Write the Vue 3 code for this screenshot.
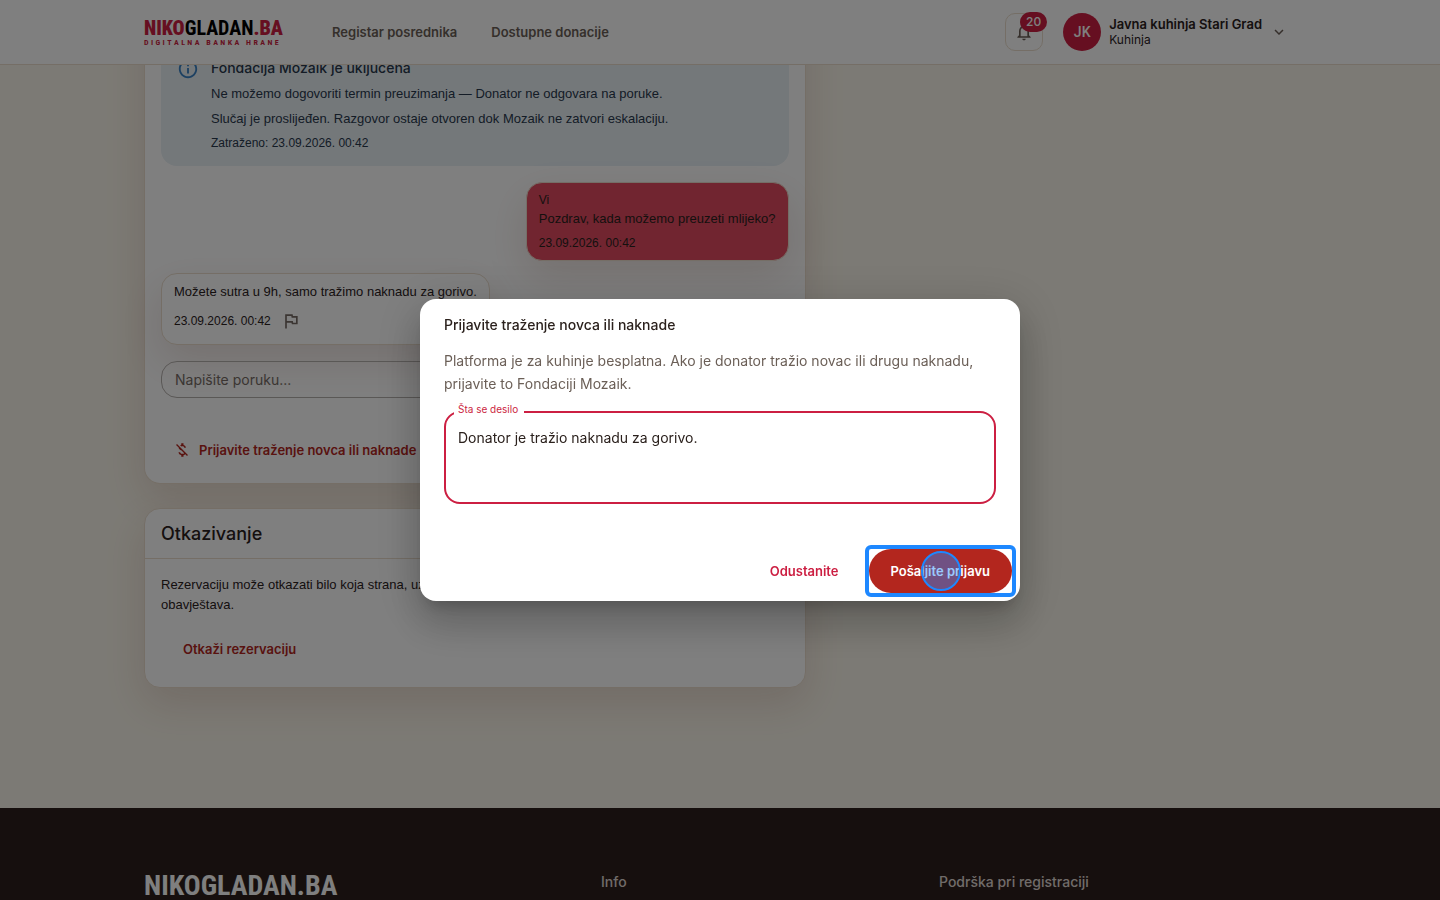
<template>
  <div class="page">
    <header class="topbar">
      <div class="container topbar-inner">
        <a href="#" class="logo">
          <span class="logo-name"><b>NIKO</b>GLADAN<b>.BA</b></span>
          <span class="logo-tag"><i v-for="(letter, i) in tagline" :key="i">{{ letter }}</i></span>
        </a>
        <nav class="nav">
          <a v-for="link in navLinks" :key="link" href="#">{{ link }}</a>
        </nav>
        <button class="bell" aria-label="Obavijesti">
          <svg viewBox="0 0 24 24" width="20" height="20"><path fill="currentColor" d="M12 22c1.1 0 2-.9 2-2h-4c0 1.1.9 2 2 2m6-6v-5c0-3.07-1.63-5.64-4.5-6.32V4c0-.83-.67-1.5-1.5-1.5s-1.5.67-1.5 1.5v.68C7.64 5.36 6 7.92 6 11v5l-2 2v1h16v-1zm-2 1H8v-6c0-2.48 1.51-4.5 4-4.5s4 2.02 4 4.5z"/></svg>
          <span class="badge">20</span>
        </button>
        <button class="account">
          <span class="avatar">JK</span>
          <span class="who"><strong>Javna kuhinja Stari Grad</strong><span>Kuhinja</span></span>
          <svg viewBox="0 0 24 24" width="18" height="18"><path fill="currentColor" d="M7.41 8.59 12 13.17l4.59-4.58L18 10l-6 6-6-6z"/></svg>
        </button>
      </div>
    </header>

    <main class="container main">
      <section class="card chat">
        <div class="alert">
          <svg viewBox="0 0 24 24" width="22" height="22"><path fill="currentColor" d="M11 7h2v2h-2zm0 4h2v6h-2zm1-9C6.48 2 2 6.48 2 12s4.48 10 10 10 10-4.48 10-10S17.52 2 12 2m0 18c-4.41 0-8-3.59-8-8s3.59-8 8-8 8 3.59 8 8-3.59 8-8 8"/></svg>
          <div>
            <h3>Fondacija Mozaik je uključena</h3>
            <p>Ne možemo dogovoriti termin preuzimanja — Donator ne odgovara na poruke.</p>
            <p>Slučaj je proslijeđen. Razgovor ostaje otvoren dok Mozaik ne zatvori eskalaciju.</p>
            <p class="small">Zatraženo: 23.09.2026. 00:42</p>
          </div>
        </div>

        <div class="bubble mine">
          <span class="small">Vi</span>
          <p>Pozdrav, kada možemo preuzeti mlijeko?</p>
          <span class="small time">23.09.2026. 00:42</span>
        </div>

        <div class="bubble theirs">
          <p>Možete sutra u 9h, samo tražimo naknadu za gorivo.</p>
          <div class="meta">
            <span class="small">23.09.2026. 00:42</span>
            <button class="flag" aria-label="Prijavi poruku">
              <svg viewBox="0 0 24 24" width="20" height="20"><path fill="currentColor" d="m12.36 6 .4 2H18v6h-3.36l-.4-2H7V6zM14 4H5v17h2v-7h5.6l.4 2h7V6h-5.6z"/></svg>
            </button>
          </div>
        </div>

        <input class="message" type="text" placeholder="Napišite poruku..." aria-label="Napišite poruku" />

        <button class="link-danger report">
          <svg viewBox="0 0 24 24" width="18" height="18"><path fill="currentColor" d="M12.5 6.9c1.78 0 2.44.85 2.5 2.1h2.21c-.07-1.72-1.12-3.3-3.21-3.81V3h-3v2.16c-.53.12-1.03.3-1.48.54l1.47 1.47c.41-.17.91-.27 1.51-.27M5.33 4.06 4.06 5.33 7.5 8.77c0 2.08 1.56 3.21 3.91 3.91l3.51 3.51c-.34.48-1.05.91-2.42.91-2.06 0-2.87-.92-2.98-2.1h-2.2c.12 2.19 1.76 3.42 3.68 3.83V21h3v-2.15c.96-.18 1.82-.55 2.45-1.12l2.22 2.22 1.27-1.27z"/></svg>
          Prijavite traženje novca ili naknade
        </button>
      </section>

      <section class="card">
        <h2>Otkazivanje</h2>
        <div class="card-body">
          <p>Rezervaciju može otkazati bilo koja strana, uz navođenje razloga. Druga strana se o tome odmah obavještava.</p>
          <button class="link-danger">Otkaži rezervaciju</button>
        </div>
      </section>
    </main>

    <footer class="footer">
      <div class="container footer-inner">
        <div class="footer-logo">NIKOGLADAN.BA</div>
        <h4>Info</h4>
        <h4>Podrška pri registraciji</h4>
      </div>
    </footer>

    <div class="backdrop">
      <div class="dialog" role="dialog" aria-modal="true" aria-labelledby="dialog-title">
        <h2 id="dialog-title">Prijavite traženje novca ili naknade</h2>
        <p>Platforma je za kuhinje besplatna. Ako je donator tražio novac ili drugu naknadu, prijavite to Fondaciji Mozaik.</p>
        <div class="field">
          <label for="what">Šta se desilo</label>
          <textarea id="what" v-model="description" rows="3"></textarea>
        </div>
        <div class="actions">
          <button class="cancel">Odustanite</button>
          <button class="submit">Pošaljite prijavu<span class="pointer"></span></button>
        </div>
      </div>
    </div>
  </div>
</template>

<script setup>
import { ref } from 'vue'

const tagline = 'DIGITALNA BANKA HRANE'.split('')
const navLinks = ['Registar posrednika', 'Dostupne donacije']
const description = ref('Donator je tražio naknadu za gorivo.')
</script>

<style>
body {
  margin: 0;
}
</style>

<style scoped>
* {
  box-sizing: border-box;
}

.page {
  height: 100vh;
  overflow: hidden;
  background: #f9f5ea;
  color: #2b211d;
  font-family: Inter, "Liberation Sans", sans-serif;
  font-size: 13px;
  line-height: 20px;
}

h2, h3, h4, p {
  margin: 0;
}

button {
  padding: 0;
  border: none;
  background: none;
  color: inherit;
  font: inherit;
}

a {
  color: inherit;
  text-decoration: none;
}

svg {
  flex: none;
}

.container {
  width: 100%;
  max-width: 1152px;
  margin: 0 auto;
}

.card p,
.small {
  font-family: "Liberation Sans", Arial, sans-serif;
}

.card .small {
  font-size: 12px;
}

.topbar {
  position: fixed;
  top: 0;
  left: 0;
  right: 0;
  z-index: 1;
  border-bottom: 1px solid #eaddcd;
  background: #fff;
}

.topbar-inner {
  display: flex;
  align-items: center;
  height: 64px;
}

.logo {
  display: flex;
  flex-direction: column;
  width: 135px;
  color: #000;
  font-family: "Roboto Condensed", Roboto, sans-serif;
}

.logo-name {
  font-size: 20px;
  font-weight: 700;
  line-height: 21px;
}

.logo-name b,
.logo-tag {
  color: #cc1f42;
}

.logo-tag {
  display: flex;
  justify-content: space-between;
  font-size: 8px;
  font-weight: 700;
  line-height: 8px;
}

.logo-tag i {
  min-width: 2px;
  font-style: normal;
}

.nav {
  display: flex;
  flex: 1;
  gap: 34px;
  margin-left: 53px;
  color: #6b5f57;
  font-weight: 600;
}

.bell {
  position: relative;
  display: grid;
  place-items: center;
  width: 38px;
  height: 38px;
  border: 1px solid #eaddcd;
  border-radius: 10px;
  color: #6b5f57;
}

.badge {
  position: absolute;
  top: -2px;
  right: -5px;
  padding: 0 6px;
  border-radius: 10px;
  background: #cc1f42;
  color: #fff;
  font-size: 12px;
  font-weight: 500;
}

.account {
  display: flex;
  align-items: center;
  gap: 8px;
  margin: 0 8px 0 20px;
  text-align: left;
}

.account svg {
  color: #6b5f57;
}

.avatar {
  width: 38px;
  border-radius: 50%;
  background: #cc1f42;
  color: #fff;
  font-family: Roboto, sans-serif;
  font-size: 14px;
  font-weight: 500;
  line-height: 38px;
  text-align: center;
}

.who {
  display: flex;
  flex-direction: column;
  font-size: 12px;
  line-height: 15px;
}

.who strong {
  font-size: 13px;
  font-weight: 600;
}

.main {
  display: grid;
  grid-template-columns: 7fr 5fr;
  gap: 24px 18px;
  padding-bottom: 120px;
}

.card {
  grid-column: 1;
  border: 1px solid #eaddcd;
  border-radius: 16px;
  background: #fff;
  box-shadow: 0 16px 40px rgba(110, 45, 20, 0.14);
}

.chat {
  display: flex;
  flex-direction: column;
  align-items: flex-start;
  padding: 16px 16px 11px;
  border-top: none;
  border-radius: 0 0 16px 16px;
}

.alert {
  display: flex;
  gap: 12px;
  width: 100%;
  padding: 41px 16px 13px;
  border-radius: 16px;
  background: #e8f0f5;
  color: #29394d;
}

.alert svg {
  margin-top: 1px;
  color: #3b82c4;
}

.alert h3 {
  margin-bottom: 5px;
  font-size: 14px;
  font-weight: 500;
  line-height: 22px;
}

.alert p {
  margin-bottom: 5px;
}

.alert .small {
  margin-top: -1px;
  margin-bottom: 0;
}

.bubble {
  padding: 8px 12px;
  border: 1px solid #eaddcd;
  border-radius: 16px;
  background: #fff;
  box-shadow: 0 16px 40px rgba(110, 45, 20, 0.14);
}

.mine {
  display: flex;
  flex-direction: column;
  align-self: flex-end;
  margin: 16px 0 12px;
  background: #e34b61;
}

.mine .small {
  line-height: 18px;
}

.time {
  margin-top: 5px;
}

.theirs {
  margin-bottom: 16px;
}

.meta {
  display: flex;
  align-items: center;
  gap: 10px;
  height: 34px;
  padding-top: 4px;
}

.flag {
  display: flex;
  color: #766b65;
}

.message {
  width: 100%;
  height: 37px;
  margin-bottom: 30px;
  padding: 0 13px;
  border: 1px solid #b5b0ad;
  border-radius: 16px;
  background: none;
  font-family: inherit;
  font-size: 14px;
}

.message::placeholder {
  color: #766b65;
}

.link-danger {
  display: flex;
  align-items: center;
  gap: 8px;
  height: 44px;
  padding: 0 22px;
  color: #b3261e;
  font-weight: 600;
}

.report {
  padding: 0 12px;
}

.card h2 {
  padding: 0 16px;
  border-bottom: 1px solid #eaddcd;
  font-size: 18px;
  font-weight: 500;
  line-height: 49px;
}

.card-body {
  padding: 16px;
}

.card-body .link-danger {
  margin-top: 12px;
}

.footer {
  min-height: 400px;
  padding-top: 64px;
  background: #2c1f1c;
  color: #fff;
}

.footer-inner {
  display: grid;
  grid-template-columns: 457px 338px 1fr;
}

.footer-logo {
  font-family: "Roboto Condensed", Roboto, sans-serif;
  font-size: 28px;
  font-weight: 700;
  line-height: 28px;
}

.footer h4 {
  color: #e0d9d4;
  font-size: 14px;
  font-weight: 500;
}

.backdrop {
  position: fixed;
  inset: 0;
  z-index: 2;
  display: grid;
  place-items: center;
  background: rgba(0, 0, 0, 0.5);
}

.dialog {
  width: 100%;
  max-width: 600px;
  border-radius: 16px;
  background: #fff;
  box-shadow: 0 11px 15px -7px rgba(0, 0, 0, 0.2), 0 24px 38px 3px rgba(0, 0, 0, 0.14), 0 9px 46px 8px rgba(0, 0, 0, 0.12);
}

.dialog h2 {
  padding: 15px 24px 13px;
  font-size: 14px;
  font-weight: 500;
  line-height: 22px;
}

.dialog p {
  padding: 0 24px;
  color: #6b5f57;
  font-size: 14px;
  line-height: 23px;
}

.field {
  position: relative;
  margin: 16px 24px 0;
}

.field label {
  position: absolute;
  top: -9px;
  left: 10px;
  padding: 0 6px 0 4px;
  background: #fff;
  color: #cc1f42;
  font-size: 10px;
  line-height: 14px;
}

.field textarea {
  display: block;
  width: 100%;
  height: 93px;
  padding: 13px 12px;
  border: 2px solid #cc1f42;
  border-radius: 16px;
  outline: none;
  color: inherit;
  font-family: inherit;
  font-size: 14px;
  line-height: 23px;
  resize: none;
}

.actions {
  display: flex;
  justify-content: flex-end;
  gap: 8px;
  padding: 45px 8px 8px;
  font-weight: 600;
}

.actions button {
  height: 44px;
  padding: 0 22px;
  border-radius: 22px;
}

.cancel {
  color: #cc1f42;
}

.actions .submit {
  position: relative;
  background: #b3261e;
  color: #fff;
}

.submit::before {
  content: "";
  position: absolute;
  inset: -4px;
  border: 4px solid #1e88ff;
  border-radius: 6px;
}

.pointer {
  position: absolute;
  top: 2px;
  left: 52px;
  width: 40px;
  height: 40px;
  border: 2px solid #1e88ff;
  border-radius: 50%;
  background: rgba(30, 136, 255, 0.45);
}
</style>
